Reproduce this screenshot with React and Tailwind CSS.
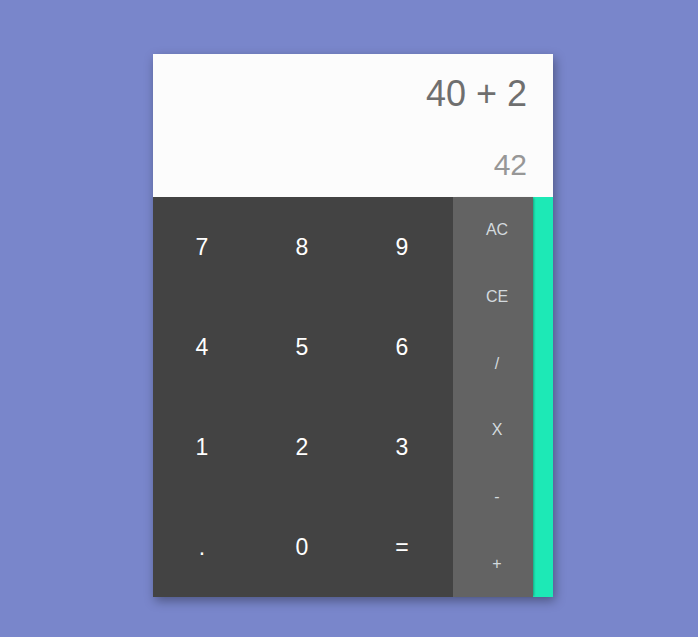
export default function App() {
  const digits = ['7', '8', '9', '4', '5', '6', '1', '2', '3', '.', '0', '='];
  const ops = ['AC', 'CE', '/', 'X', '-', '+'];

  return (
    <div className="min-h-[637px] w-full bg-[#7986cb] pt-[54px] font-['Liberation_Sans',Arial,sans-serif]">
      <div className="ml-[153px] flex w-[400px] flex-col shadow-[2px_4px_10px_rgba(0,0,0,0.35)]">
        <div className="flex h-[143px] flex-col items-end bg-[#fcfcfc] pr-[26px] pt-[16px]">
          <div className="text-[36px] leading-[48px] text-[#6f6f6f]">40 + 2</div>
          <div className="mt-[28px] text-[30px] leading-[38px] text-[#979797]">42</div>
        </div>
        <div className="flex h-[400px]">
          <div className="grid w-[300px] grid-cols-3 grid-rows-4 bg-[#434343]">
            {digits.map((d) => (
              <button key={d} className="flex items-center justify-center pr-[2px] text-[23px] text-white">
                {d}
              </button>
            ))}
          </div>
          <div className="z-10 flex w-[80px] flex-col bg-[#636363] shadow-[2px_0_2px_-1px_rgba(0,0,0,0.3)]">
            {ops.map((o) => (
              <button key={o} className="flex flex-1 items-center justify-center pl-[8px] text-[16px] text-[#d3dade]">
                {o}
              </button>
            ))}
          </div>
          <div className="w-[20px] bg-[#1de9b6]" />
        </div>
      </div>
    </div>
  );
}
